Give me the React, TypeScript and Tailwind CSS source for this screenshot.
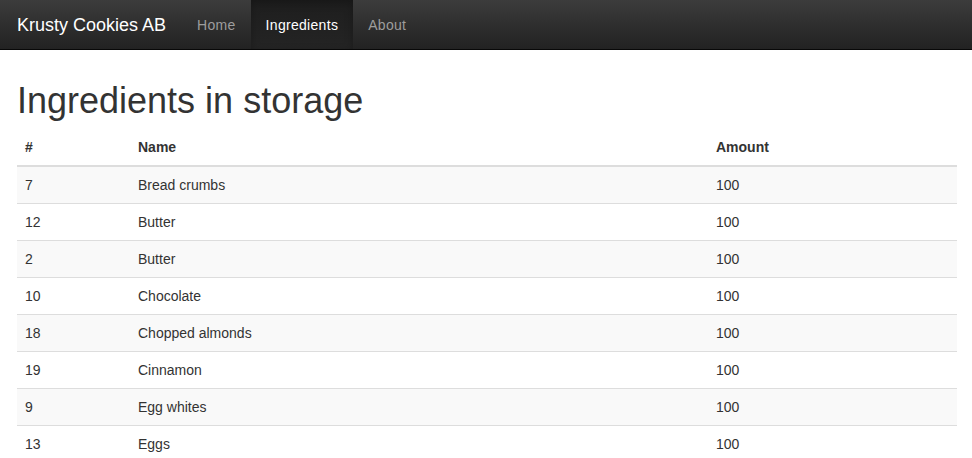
import React from 'react';

interface Ingredient {
  id: number;
  name: string;
  amount: number;
}

const ingredients: Ingredient[] = [
  { id: 7, name: 'Bread crumbs', amount: 100 },
  { id: 12, name: 'Butter', amount: 100 },
  { id: 2, name: 'Butter', amount: 100 },
  { id: 10, name: 'Chocolate', amount: 100 },
  { id: 18, name: 'Chopped almonds', amount: 100 },
  { id: 19, name: 'Cinnamon', amount: 100 },
  { id: 9, name: 'Egg whites', amount: 100 },
  { id: 13, name: 'Eggs', amount: 100 },
];

const navLinks = [
  { label: 'Home', active: false },
  { label: 'Ingredients', active: true },
  { label: 'About', active: false },
];

const App: React.FC = () => {
  return (
    <div className="min-h-screen bg-white text-[#333] font-['Liberation_Sans',Arial,sans-serif] text-[14px]">
      {/* Navbar */}
      <nav className="h-[50px] flex items-stretch bg-gradient-to-b from-[#3c3c3c] to-[#222] border-b border-[#080808]">
        <a className="flex items-center pt-[1px] pl-[17px] pr-[16px] text-[18px] text-white">Krusty Cookies AB</a>
        <ul className="flex items-stretch">
          {navLinks.map((link) => (
            <li key={link.label} className="flex">
              <a
                className={
                  link.active
                    ? 'flex items-center pt-[1px] px-[15px] tracking-[0.3px] text-white bg-gradient-to-b from-[#1e1e1e] to-[#242424] shadow-[inset_0_3px_9px_rgba(0,0,0,0.25)]'
                    : 'flex items-center pt-[1px] px-[15px] tracking-[0.3px] text-[#9d9d9d]'
                }
              >
                {link.label}
              </a>
            </li>
          ))}
        </ul>
      </nav>

      {/* Content */}
      <div className="pl-[17px] pr-[15px]">
        <h1 className="mt-[31px] mb-[8px] text-[36px] leading-[40px] font-normal">Ingredients in storage</h1>
        <table className="w-full border-collapse">
          <thead>
            <tr className="border-b-2 border-[#ddd]">
              <th className="w-[113px] p-[8px] leading-[20px] text-left font-bold">#</th>
              <th className="w-[578px] p-[8px] leading-[20px] text-left font-bold">Name</th>
              <th className="p-[8px] leading-[20px] text-left font-bold">Amount</th>
            </tr>
          </thead>
          <tbody>
            {ingredients.map((item, i) => (
              <tr key={i} className={`border-t border-[#ddd] ${i % 2 === 0 ? 'bg-[#f9f9f9]' : 'bg-white'}`}>
                <td className="p-[8px] leading-[20px]">{item.id}</td>
                <td className="p-[8px] leading-[20px]">{item.name}</td>
                <td className="p-[8px] leading-[20px]">{item.amount}</td>
              </tr>
            ))}
          </tbody>
        </table>
      </div>
    </div>
  );
};

export default App;
